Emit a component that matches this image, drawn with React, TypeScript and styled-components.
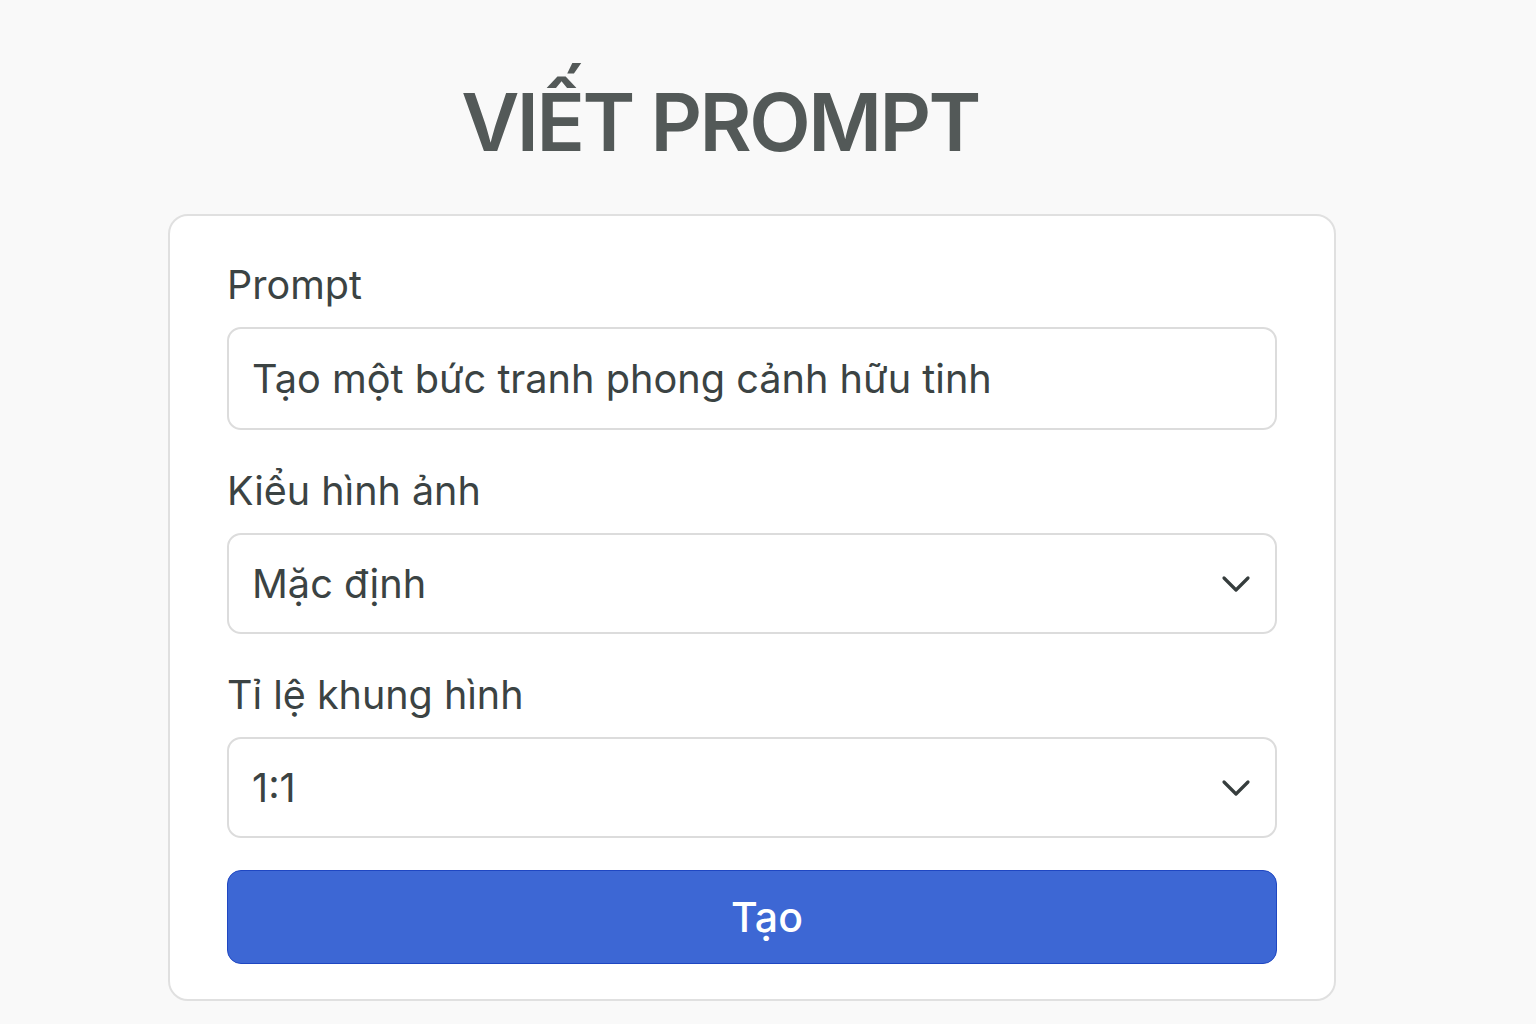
import React from "react";
import styled, { createGlobalStyle } from "styled-components";

const Global = createGlobalStyle`
  html, body { margin: 0; padding: 0; background: #f9f9f9; }
  body { font-family: Inter, "Noto Sans", "Liberation Sans", sans-serif; color: #3b4343; }
  * { box-sizing: border-box; }
`;

const Page = styled.div`
  min-height: 1024px;
  padding: 82px 0 0 168px;
  display: flex;
  flex-direction: column;
  width: 1336px;
`;

const Title = styled.h1`
  margin: 0 64px 52px 0;
  font-size: 80px;
  line-height: 80px;
  font-weight: 600;
  color: #535958;
  text-align: center;
  letter-spacing: -2.5px;
`;

const Card = styled.div`
  width: 1168px;
  background: #fff;
  border: 2px solid #e0e0e0;
  border-radius: 20px;
  padding: 46px 57px 35px 57px;
  display: flex;
  flex-direction: column;
`;

const Field = styled.div<{ $gap?: number }>`
  display: flex;
  flex-direction: column;
  margin-bottom: ${(p) => p.$gap ?? 38}px;
`;

const Label = styled.label`
  font-size: 39.5px;
  line-height: 46px;
  font-weight: 400;
  color: #3b4343;
  margin-bottom: 19px;
`;

const Box = styled.div<{ $h: number }>`
  height: ${(p) => p.$h}px;
  border: 2px solid #dcdcdc;
  border-radius: 14px;
  background: #fff;
  display: flex;
  align-items: center;
  justify-content: space-between;
  padding: 0 24px 0 23px;
  font-size: 39.7px;
  color: #3b4343;
`;

const Chevron = () => (
  <svg width="30" height="20" viewBox="0 0 30 20" fill="none">
    <path d="M3 4 L15 16 L27 4" stroke="#363d3d" strokeWidth="3.2" strokeLinecap="round" strokeLinejoin="round" />
  </svg>
);

const Button = styled.button`
  height: 94px;
  border: 1px solid #1f47c2;
  border-radius: 14px;
  background: #3d67d4;
  color: #fff;
  font-family: inherit;
  font-size: 41px;
  font-weight: 500;
  padding: 0 0 0 30px;
  cursor: pointer;
`;

export default function App() {
  return (
    <>
      <Global />
      <Page>
        <Title>VIẾT PROMPT</Title>
        <Card>
          <Field>
            <Label>Prompt</Label>
            <Box $h={103}>Tạo một bức tranh phong cảnh hữu tinh</Box>
          </Field>
          <Field>
            <Label>Kiểu hình ảnh</Label>
            <Box $h={101}>
              Mặc định
              <Chevron />
            </Box>
          </Field>
          <Field $gap={32}>
            <Label>Tỉ lệ khung hình</Label>
            <Box $h={101}>
              1:1
              <Chevron />
            </Box>
          </Field>
          <Button>Tạo</Button>
        </Card>
      </Page>
    </>
  );
}
